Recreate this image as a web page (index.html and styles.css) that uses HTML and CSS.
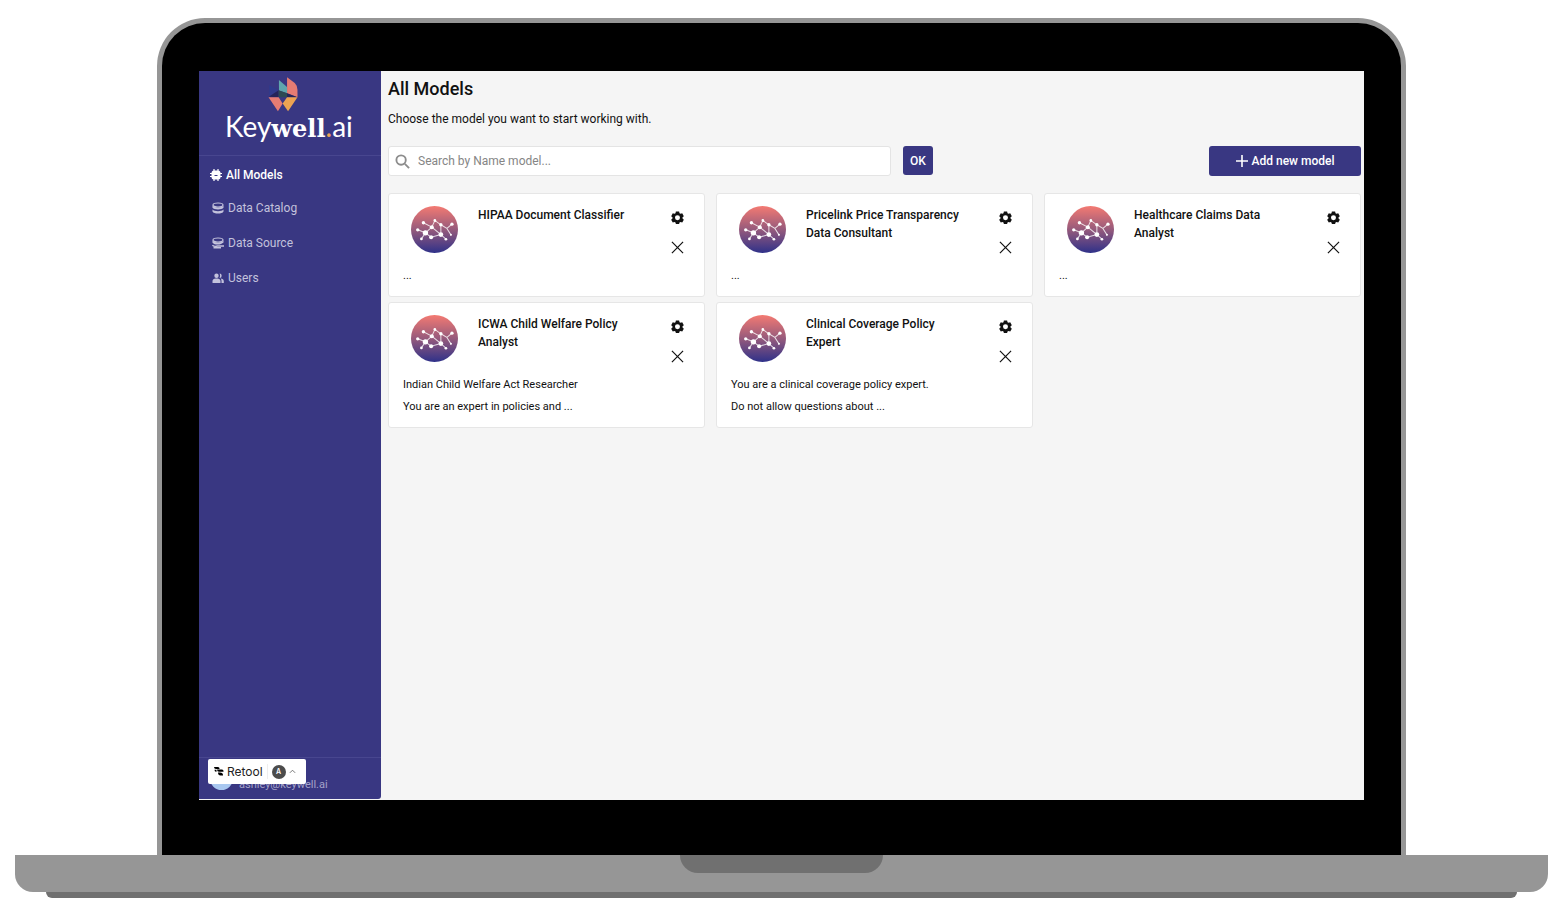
FILE: index.html
```html
<!DOCTYPE html>
<html lang="en">
<head>
  <meta charset="UTF-8" />
  <meta name="viewport" content="width=device-width, initial-scale=1" />
  <title>Keywell.ai - All Models</title>
  <link rel="stylesheet" href="styles.css">
</head>
<body>
  <svg class="sprite" aria-hidden="true">
    <defs>
      <linearGradient id="avatarFill" x1="0" y1="0" x2="0" y2="1">
        <stop offset="0" stop-color="#f47a72" />
        <stop offset="0.5" stop-color="#965a7c" />
        <stop offset="1" stop-color="#2f3189" />
      </linearGradient>
      <symbol id="network" viewBox="0 0 140 140">
        <circle cx="70" cy="70" r="70" fill="url(#avatarFill)" />
        <path d="M37 50L62 63L71 43L89 56L107 67L122 54M107 67L119 86M89 56V85L104 99M62 63L89 85L60 93L43 80L62 63M20 71L43 80L31 98" fill="none" stroke="#fff" stroke-width="3" stroke-opacity="0.8" />
        <g fill="#fff">
          <circle cx="37" cy="50" r="5" /><circle cx="71" cy="43" r="4" />
          <circle cx="62" cy="63" r="6" /><circle cx="89" cy="56" r="5" />
          <circle cx="122" cy="54" r="5" /><circle cx="20" cy="71" r="5" />
          <circle cx="43" cy="80" r="8" /><circle cx="31" cy="98" r="4" />
          <circle cx="60" cy="93" r="6" /><circle cx="89" cy="85" r="7" />
          <circle cx="104" cy="99" r="4" /><circle cx="119" cy="86" r="3" />
        </g>
      </symbol>
      <symbol id="gear" viewBox="0 0 24 24">
        <path fill="currentColor" fill-rule="evenodd" d="M9 1h6l.7 3.2 1.9 1.1 3.1-1 3 5.2-2.4 2.2v2.2l2.4 2.2-3 5.2-3.1-1-1.9 1.1L15 24H9l-.7-2.6-1.9-1.1-3.1 1-3-5.2 2.4-2.2v-2.2L.3 9.500l3-5.200 3.100 1 1.900-1.100zM12 8a4.600 4.600 0 1 0 0 9.200A4.600 4.600 0 0 0 12 8z" />
      </symbol>
      <symbol id="cross" viewBox="0 0 14 14">
        <path d="M1 1l12 12M13 1L1 13" fill="none" stroke="currentColor" stroke-width="1.300" />
      </symbol>
    </defs>
  </svg>

  <div class="lid">
    <div class="screen">
      <aside class="sidebar">
        <div class="brand">
          <svg class="brand-mark" viewBox="218 36 90 104" aria-hidden="true">
            <path fill="#303a8c" d="M222 60L250 75L222 95z" />
            <path fill="#5fa6ad" d="M251 45L275 66V84L251 76z" />
            <path fill="#e67c73" d="M275 37L298 54Q306 62 306 74V96L275 84z" />
            <path fill="#25245a" d="M221 95L250 75V96zM275 84L306 96H275z" />
            <path fill="#2c4a53" d="M250 75L275 84V96H250z" />
            <path fill="#e67c73" d="M220 96H250L262 115L248 138z" />
            <path fill="#eda352" d="M275 96H306L278 138L262 115z" />
          </svg>
          <div class="brand-name">Key<b>well</b><i>.</i>ai</div>
        </div>

        <nav class="menu">
          <a class="menu-item active" href="#">
            <svg viewBox="0 0 12 12" aria-hidden="true"><path d="M4 0v12M8 0v12M0 4.500h12M0 7.500h12" stroke="currentColor" stroke-width="1.200" /><rect x="1.500" y="1.500" width="9" height="9" rx="2.500" fill="currentColor" /><path d="M4.500 6.500h3" stroke="#393782" /></svg>
            All Models
          </a>
          <a class="menu-item" href="#">
            <svg viewBox="0 0 12 12" aria-hidden="true"><ellipse cx="6" cy="3" rx="5" ry="2" fill="none" stroke="currentColor" stroke-width="1.200" /><path d="M.5 3.500v2.200c1.500 2.300 9.500 2.300 11 0V3.500C10 6 2 6 .5 3.500zM.5 7.500v2c1 2.700 10 2.700 11 0v-2C10 9.700 2 9.700.5 7.500z" fill="currentColor" /></svg>
            Data Catalog
          </a>
          <a class="menu-item" href="#">
            <svg viewBox="0 0 12 12" aria-hidden="true"><ellipse cx="6" cy="3" rx="5" ry="2" fill="none" stroke="currentColor" stroke-width="1.200" /><path d="M.5 3.500v2.200c1.500 2 6 2.200 8.500 1.300L11.500 5.500v-2C10 6 2 6 .5 3.500z" fill="currentColor" /><path d="M.5 8.200c1 1.200 3.500 1.300 5 .8H12M1.500 10.800H9" fill="none" stroke="currentColor" stroke-width="1.400" /></svg>
            Data Source
          </a>
          <a class="menu-item" href="#">
            <svg viewBox="0 0 12 12" aria-hidden="true"><path fill="currentColor" d="M4.500 1.500a2.200 2.200 0 1 1 0 4.400 2.200 2.200 0 0 1 0-4.400zM.5 11V9c0-1.800 1.500-2.600 3-2.600h2c1.500 0 3 .8 3 2.600v2zM7.500 1.500a2.200 2.200 0 0 1 0 4.400c.8-1.300.8-3.100 0-4.400zM8.500 6.500c2 .2 3.300 1 3.300 2.700V11H9.500V9c0-1-.3-1.900-1-2.500z" /></svg>
            Users
          </a>
        </nav>

        <div class="account">
          <span class="account-avatar"></span>
          <span class="account-mail">ashley@keywell.ai</span>
          <button class="retool" type="button">
            <svg class="retool-mark" viewBox="0 0 10 9" aria-hidden="true"><path d="M0 0h4q1.500 0 1.500 1.500V2H2Q0 2 0 0zM3 2.500h5Q9.500 2.500 9.500 4v.8H5Q3 4.800 3 2.500zM.5 2.800h2v2H2Q.5 4.800.5 2.800zM4 5.500h2Q9 5.500 9 8v.5H6.500Q4 8.500 4 5.500z" /></svg>
            Retool
            <span class="retool-divider"></span>
            <span class="retool-user">A</span>
            <svg class="retool-caret" viewBox="0 0 8 5" aria-hidden="true"><path d="M1 4l3-3 3 3" fill="none" stroke="#666" /></svg>
          </button>
        </div>
      </aside>

      <main class="content">
        <h1>All Models</h1>
        <p class="lead">Choose the model you want to start working with.</p>

        <form class="toolbar">
          <label class="search">
            <svg viewBox="0 0 16 16" aria-hidden="true"><circle cx="6.500" cy="6.500" r="5" /><path d="M10.500 10.500L15 15" /></svg>
            <input type="text" aria-label="Search by name" placeholder="Search by Name model..." />
          </label>
          <button class="btn" type="button">OK</button>
          <button class="btn btn-add" type="button">
            <svg viewBox="0 0 12 12" aria-hidden="true"><path d="M6 0v12M0 6h12" stroke="currentColor" stroke-width="1.600" /></svg>
            Add new model
          </button>
        </form>

        <section class="cards">
          <article class="card">
            <div class="card-head">
              <svg class="avatar" aria-hidden="true"><use href="#network" /></svg>
              <h2>HIPAA Document Classifier</h2>
              <div class="actions">
                <button type="button" aria-label="Settings"><svg><use href="#gear" /></svg></button>
                <button type="button" aria-label="Delete"><svg><use href="#cross" /></svg></button>
              </div>
            </div>
            <p>...</p>
          </article>

          <article class="card">
            <div class="card-head">
              <svg class="avatar" aria-hidden="true"><use href="#network" /></svg>
              <h2>Pricelink Price Transparency Data Consultant</h2>
              <div class="actions">
                <button type="button" aria-label="Settings"><svg><use href="#gear" /></svg></button>
                <button type="button" aria-label="Delete"><svg><use href="#cross" /></svg></button>
              </div>
            </div>
            <p>...</p>
          </article>

          <article class="card">
            <div class="card-head">
              <svg class="avatar" aria-hidden="true"><use href="#network" /></svg>
              <h2>Healthcare Claims Data Analyst</h2>
              <div class="actions">
                <button type="button" aria-label="Settings"><svg><use href="#gear" /></svg></button>
                <button type="button" aria-label="Delete"><svg><use href="#cross" /></svg></button>
              </div>
            </div>
            <p>...</p>
          </article>

          <article class="card">
            <div class="card-head">
              <svg class="avatar" aria-hidden="true"><use href="#network" /></svg>
              <h2>ICWA Child Welfare Policy Analyst</h2>
              <div class="actions">
                <button type="button" aria-label="Settings"><svg><use href="#gear" /></svg></button>
                <button type="button" aria-label="Delete"><svg><use href="#cross" /></svg></button>
              </div>
            </div>
            <p>Indian Child Welfare Act Researcher</p>
            <p>You are an expert in policies and ...</p>
          </article>

          <article class="card">
            <div class="card-head">
              <svg class="avatar" aria-hidden="true"><use href="#network" /></svg>
              <h2>Clinical Coverage Policy Expert</h2>
              <div class="actions">
                <button type="button" aria-label="Settings"><svg><use href="#gear" /></svg></button>
                <button type="button" aria-label="Delete"><svg><use href="#cross" /></svg></button>
              </div>
            </div>
            <p>You are a clinical coverage policy expert.</p>
            <p>Do not allow questions about ...</p>
          </article>
        </section>
      </main>
    </div>
  </div>

  <div class="base"><div class="notch"></div></div>
  <div class="foot"></div>
</body>
</html>
```

FILE: styles.css
```css
* {
  box-sizing: border-box;
}

body {
  margin: 0;
  min-height: 100vh;
  padding: 18px 15px 17px;
  display: flex;
  flex-direction: column;
  background: #fff;
  color: #111;
  font-family: Roboto, "Liberation Sans", sans-serif;
  font-size: 12px;
}

h1, h2, p {
  margin: 0;
}

button, input {
  font: inherit;
}

button {
  border: 0;
  padding: 0;
  cursor: pointer;
}

.sprite {
  position: absolute;
  width: 0;
  height: 0;
}

/* laptop */
.lid {
  flex: 1;
  display: flex;
  margin: 0 142px;
  padding: 48px 37px 55px;
  border: 5px solid #969696;
  border-bottom: 0;
  border-radius: 48px 48px 0 0;
  background: #000;
}

.base {
  height: 37px;
  border-radius: 0 0 18px 18px;
  background: #969696;
}

.notch {
  width: 203px;
  height: 18px;
  margin: 0 auto;
  border-radius: 0 0 18px 18px;
  background: #707070;
}

.foot {
  height: 6px;
  margin: 0 31px;
  border-radius: 0 0 6px 6px;
  background: #707070;
}

.screen {
  flex: 1;
  display: flex;
  background: #f5f5f5;
}

/* sidebar */
.sidebar {
  flex: 0 0 182px;
  display: flex;
  flex-direction: column;
  margin-bottom: 1px;
  border-radius: 0 0 3px 0;
  background: #393782;
}

.brand {
  height: 85px;
  padding: 6px 26px 0;
  border-bottom: 1px solid #48468f;
}

.brand-mark {
  display: block;
  width: 32px;
  height: 35px;
  margin-left: 42px;
}

.brand-name {
  color: #fff;
  font-family: Lato, sans-serif;
  font-size: 28px;
  line-height: 28px;
  white-space: nowrap;
}

.brand-name b {
  font-family: "DejaVu Serif", serif;
  font-size: 24px;
  font-weight: 700;
}

.brand-name i {
  color: #eda352;
  font-style: normal;
}

.menu {
  flex: 1;
  padding: 4px 11px 0;
}

.menu-item {
  display: flex;
  align-items: center;
  gap: 4px;
  height: 35px;
  padding-left: 2px;
  color: #c3c2dc;
  text-decoration: none;
}

.menu-item svg {
  width: 12px;
  height: 12px;
}

.menu-item.active {
  height: 30px;
  padding-left: 0;
  color: #fff;
  font-weight: 500;
}

.account {
  position: relative;
  display: flex;
  align-items: center;
  gap: 6px;
  height: 42px;
  padding: 12px 11px 0;
  border-top: 1px solid #48468f;
}

.account-avatar {
  width: 23px;
  height: 23px;
  margin-bottom: 12px;
  border-radius: 50%;
  background: #a9c8f0;
}

.account-mail {
  color: #a5a3c9;
  font-size: 11px;
}

.retool {
  position: absolute;
  top: 1px;
  left: 9px;
  display: flex;
  align-items: center;
  gap: 3px;
  width: 98px;
  height: 25px;
  padding: 0 6px;
  border-radius: 2px;
  background: #fff;
  color: #222;
  font-family: Inter, sans-serif;
}

.retool-mark {
  width: 10px;
  height: 9px;
}

.retool-divider {
  width: 1px;
  height: 15px;
  margin: 0 1px;
  background: #eee;
}

.retool-user {
  width: 14px;
  height: 14px;
  border-radius: 50%;
  background: #4c4c4c;
  color: #fff;
  font-size: 7px;
  font-weight: 600;
  line-height: 14px;
}

.retool-caret {
  width: 7px;
  height: 5px;
}

/* main column */
.content {
  flex: 1;
  min-width: 0;
  padding: 6px 3px 0 7px;
}

h1 {
  font-size: 18px;
  font-weight: 500;
  line-height: 24px;
}

.lead {
  margin-top: 8px;
  line-height: 20px;
}

.toolbar {
  display: flex;
  align-items: flex-start;
  gap: 12px;
  margin: 17px 0;
}

.search {
  display: flex;
  align-items: center;
  gap: 8px;
  width: calc(52% - 3px);
  height: 30px;
  padding: 0 6px;
  border: 1px solid #e4e4e4;
  border-radius: 3px;
  background: #fff;
}

.search svg {
  width: 15px;
  height: 15px;
  fill: none;
  stroke: #8c8c8c;
  stroke-width: 2;
}

.search input {
  flex: 1;
  min-width: 0;
  padding: 0;
  border: 0;
  outline: 0;
  background: none;
}

.search input::placeholder {
  color: #858585;
}

.btn {
  height: 29px;
  padding: 0 7px;
  border-radius: 3px;
  background: #393782;
  color: #fff;
  font-weight: 500;
}

.btn-add {
  display: flex;
  align-items: center;
  justify-content: center;
  gap: 4px;
  width: 152px;
  height: 30px;
  margin-left: auto;
}

.btn-add svg {
  width: 12px;
  height: 12px;
}

.cards {
  display: grid;
  grid-template-columns: repeat(3, 1fr);
  gap: 5px 11px;
}

.card {
  padding: 12px 14px 9px;
  border: 1px solid #e6e6e6;
  border-radius: 3px;
  background: #fff;
}

.card-head {
  display: flex;
  gap: 20px;
  height: 59px;
  padding: 0 3px 0 8px;
}

.avatar {
  width: 47px;
  height: 47px;
}

.card h2 {
  flex: 1;
  padding-right: 10px;
  font-size: 12px;
  font-weight: 500;
  line-height: 18px;
}

.actions {
  display: flex;
  flex-direction: column;
  gap: 10px;
  padding-top: 1px;
}

.actions button {
  display: grid;
  place-items: center;
  width: 20px;
  height: 20px;
  background: none;
  color: #111;
}

.actions svg {
  width: 13px;
  height: 13px;
}

.card p {
  font-size: 11px;
  line-height: 22px;
}
```
